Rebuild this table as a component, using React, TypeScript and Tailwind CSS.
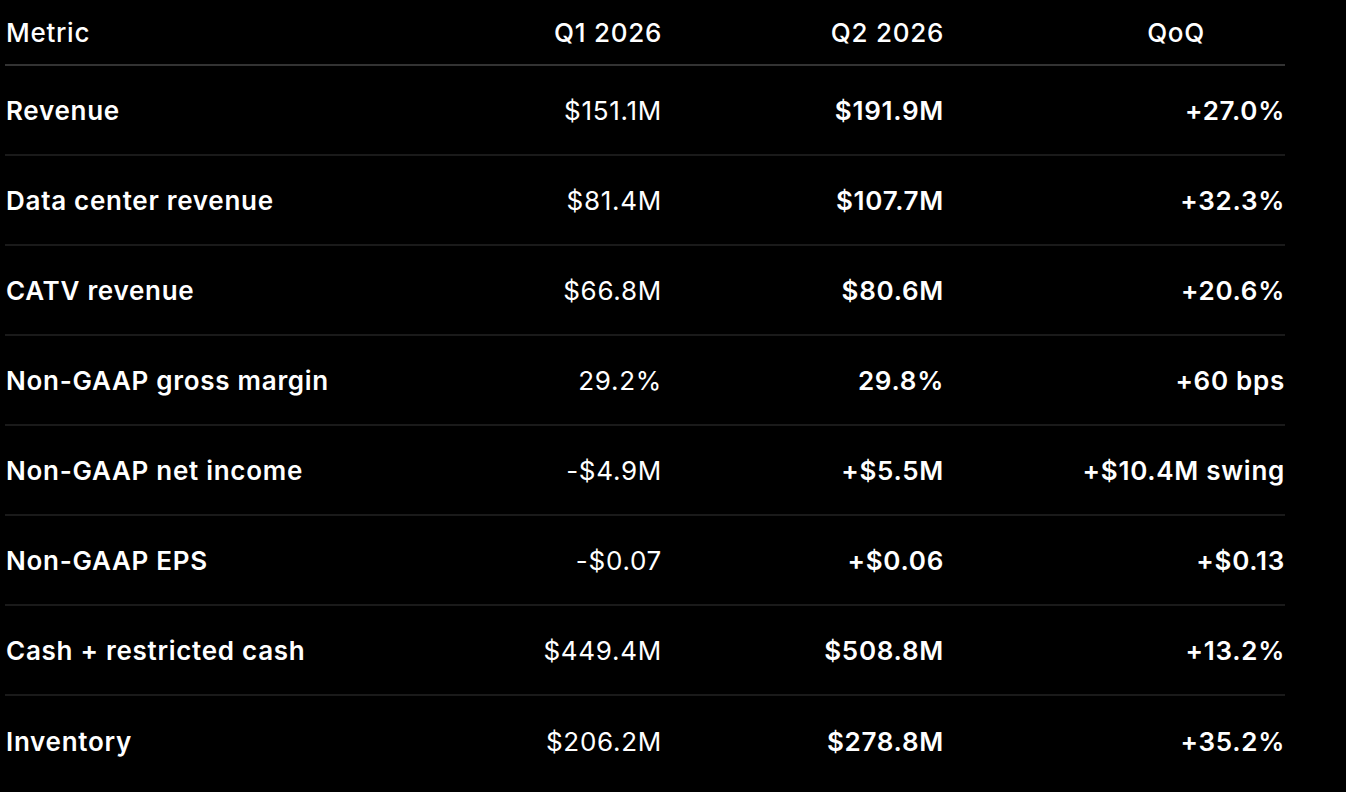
const rows = [
  ["Revenue", "$151.1M", "$191.9M", "+27.0%"],
  ["Data center revenue", "$81.4M", "$107.7M", "+32.3%"],
  ["CATV revenue", "$66.8M", "$80.6M", "+20.6%"],
  ["Non-GAAP gross margin", "29.2%", "29.8%", "+60 bps"],
  ["Non-GAAP net income", "-$4.9M", "+$5.5M", "+$10.4M swing"],
  ["Non-GAAP EPS", "-$0.07", "+$0.06", "+$0.13"],
  ["Cash + restricted cash", "$449.4M", "$508.8M", "+13.2%"],
  ["Inventory", "$206.2M", "$278.8M", "+35.2%"],
];

export default function App() {
  return (
    <main className="min-h-screen bg-black text-white font-['Inter',sans-serif] pl-[5px] tracking-[0.045em]">
      <div className="w-[1280px]">
        <div className="grid grid-cols-[380px_277px_282px_341px] h-[66px] pt-[1px] items-center border-b-2 border-[#333333] text-[26px] font-medium">
          <div className="pl-[1px]">Metric</div>
          <div className="text-right">Q1 2026</div>
          <div className="text-right">Q2 2026</div>
          <div className="text-right pr-[80px]">QoQ</div>
        </div>
        {rows.map((row, index) => (
          <div
            key={row[0]}
            className={`grid grid-cols-[380px_277px_282px_341px] h-[90px] pt-[1px] items-center text-[26px] ${index < rows.length - 1 ? "border-b-2 border-[#1a1a1a]" : ""}`}
          >
            <div className="pl-[1px] font-semibold">{row[0]}</div>
            <div className="text-right font-normal">{row[1]}</div>
            <div className="text-right font-semibold">{row[2]}</div>
            <div className="text-right font-semibold">{row[3]}</div>
          </div>
        ))}
      </div>
    </main>
  );
}
